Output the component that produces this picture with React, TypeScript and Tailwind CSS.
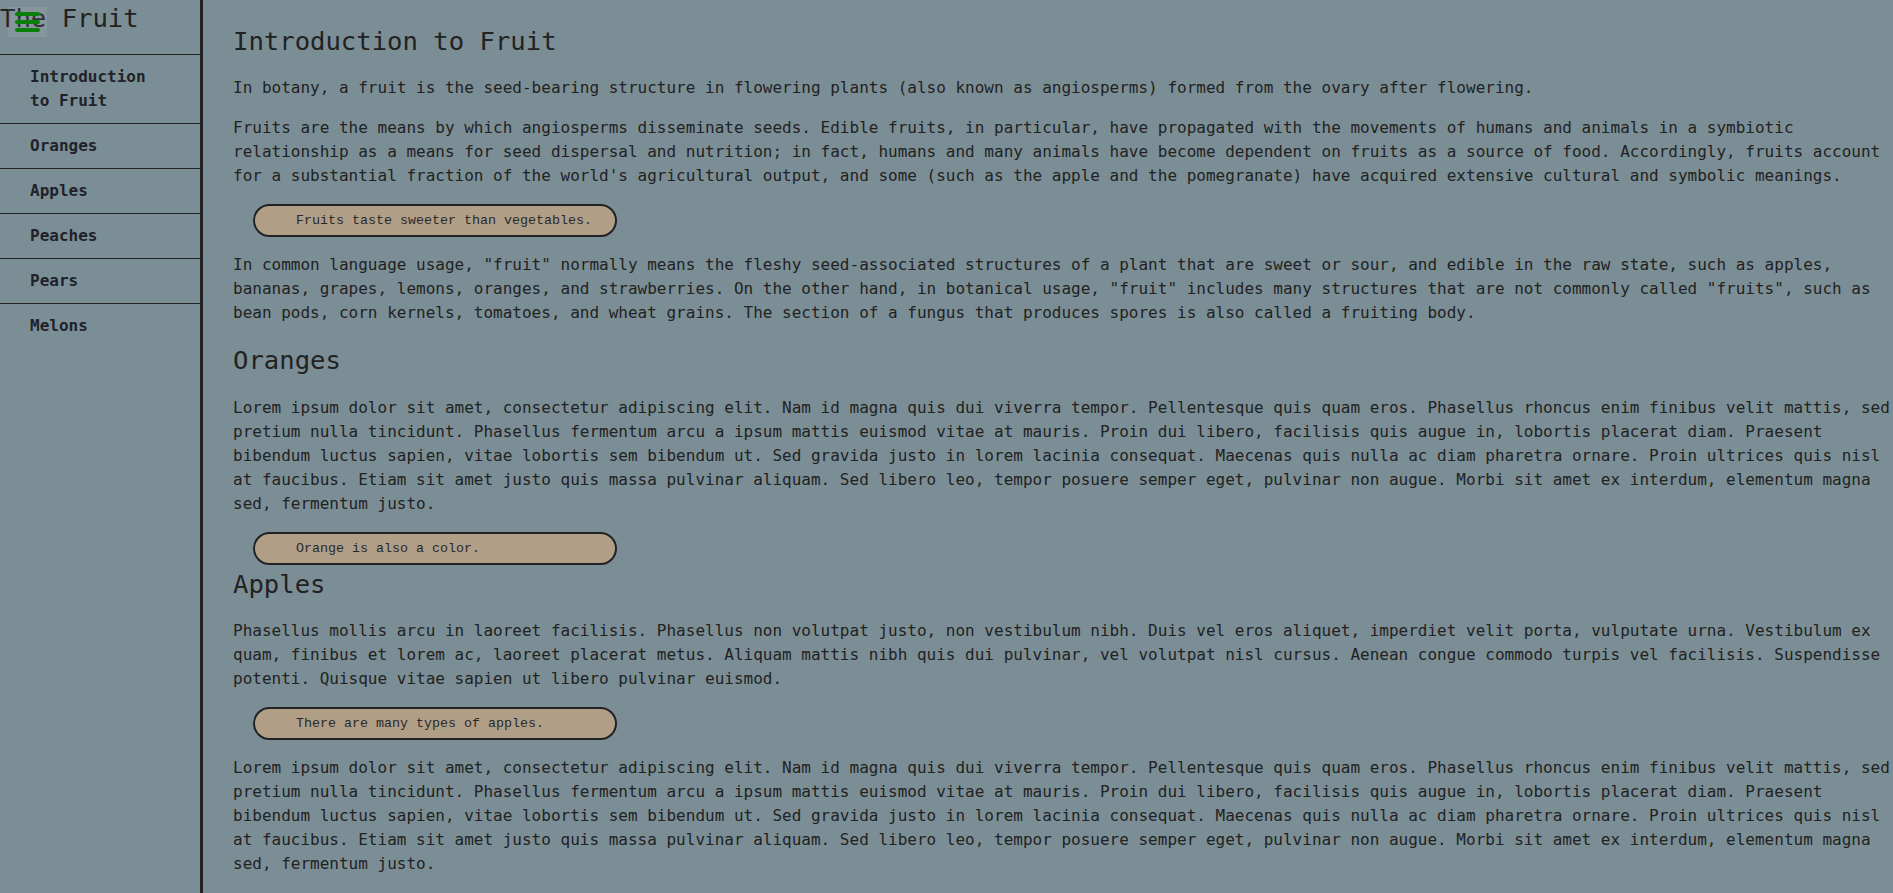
import React from "react";

const LOREM =
  "Lorem ipsum dolor sit amet, consectetur adipiscing elit. Nam id magna quis dui viverra tempor. Pellentesque quis quam eros. Phasellus rhoncus enim finibus velit mattis, sed pretium nulla tincidunt. Phasellus fermentum arcu a ipsum mattis euismod vitae at mauris. Proin dui libero, facilisis quis augue in, lobortis placerat diam. Praesent bibendum luctus sapien, vitae lobortis sem bibendum ut. Sed gravida justo in lorem lacinia consequat. Maecenas quis nulla ac diam pharetra ornare. Proin ultrices quis nisl at faucibus. Etiam sit amet justo quis massa pulvinar aliquam. Sed libero leo, tempor posuere semper eget, pulvinar non augue. Morbi sit amet ex interdum, elementum magna sed, fermentum justo.";

const APPLES =
  "Phasellus mollis arcu in laoreet facilisis. Phasellus non volutpat justo, non vestibulum nibh. Duis vel eros aliquet, imperdiet velit porta, vulputate urna. Vestibulum ex quam, finibus et lorem ac, laoreet placerat metus. Aliquam mattis nibh quis dui pulvinar, vel volutpat nisl cursus. Aenean congue commodo turpis vel facilisis. Suspendisse potenti. Quisque vitae sapien ut libero pulvinar euismod.";

const navItems = ["Introduction to Fruit", "Oranges", "Apples", "Peaches", "Pears", "Melons"];

function H2({ children }: { children: React.ReactNode }) {
  return <h2 className="m-0 text-[25.6px] leading-[38.4px] font-normal">{children}</h2>;
}

function P({ children }: { children: React.ReactNode }) {
  return <p className="my-4 text-[16px] leading-[24px]">{children}</p>;
}

function Callout({ children }: { children: React.ReactNode }) {
  return (
    <div className="ml-[20px] w-[364px] h-[33px] rounded-full border-2 border-[#222222] bg-[#b09e87] pl-[41px] text-[13.33px] leading-[29px] text-[#2a2a2a] [font-family:'Liberation_Mono','Courier_New',monospace]">
      {children}
    </div>
  );
}

export default function App() {
  return (
    <div className="flex h-[893px] w-full overflow-hidden bg-[#7b8e95] text-[#222222] [font-family:'DejaVu_Sans_Mono',monospace]">
      <aside className="relative w-[203px] shrink-0 border-r-[3px] border-[#222222] flex flex-col">
        <div className="relative h-[54px]">
          <div className="text-[25.6px] leading-[36px] whitespace-nowrap">The Fruit</div>
          <div className="absolute left-[8px] top-[7px] w-[39px] h-[30px] bg-[rgba(255,255,255,0.08)] flex flex-col items-center justify-center gap-[4px]">
            <span className="block w-[25px] h-[4px] rounded-full bg-[#0a800a]" />
            <span className="block w-[25px] h-[4px] rounded-full bg-[#0a800a]" />
            <span className="block w-[25px] h-[4px] rounded-full bg-[#0a800a]" />
          </div>
        </div>
        <ul className="m-0 p-0 list-none">
          {navItems.map((item) => (
            <li
              key={item}
              className="border-t border-[#222222] px-[30px] py-[10px] text-[16px] leading-[24px] font-bold text-[#1f222a]"
            >
              {item}
            </li>
          ))}
        </ul>
      </aside>
      <main className="flex-1 min-w-0 overflow-hidden pl-[30px] pt-[22px] block">
        <H2>Introduction to Fruit</H2>
        <P>
          In botany, a fruit is the seed-bearing structure in flowering plants (also known as angiosperms) formed from the ovary after flowering.
        </P>
        <P>
          Fruits are the means by which angiosperms disseminate seeds. Edible fruits, in particular, have propagated with the movements of humans and animals in a symbiotic relationship as a means for seed dispersal and nutrition; in fact, humans and many animals have become dependent on fruits as a source of food. Accordingly, fruits account for a substantial fraction of the world's agricultural output, and some (such as the apple and the pomegranate) have acquired extensive cultural and symbolic meanings.
        </P>
        <Callout>Fruits taste sweeter than vegetables.</Callout>
        <P>
          In common language usage, "fruit" normally means the fleshy seed-associated structures of a plant that are sweet or sour, and edible in the raw state, such as apples, bananas, grapes, lemons, oranges, and strawberries. On the other hand, in botanical usage, "fruit" includes many structures that are not commonly called "fruits", such as bean pods, corn kernels, tomatoes, and wheat grains. The section of a fungus that produces spores is also called a fruiting body.
        </P>
        <H2>Oranges</H2>
        <P>{LOREM}</P>
        <Callout>Orange is also a color.</Callout>
        <H2>Apples</H2>
        <P>{APPLES}</P>
        <Callout>There are many types of apples.</Callout>
        <P>{LOREM}</P>
        <H2>Peaches</H2>
        <P>{LOREM}</P>
        <H2>Pears</H2>
        <P>{LOREM}</P>
        <H2>Melons</H2>
        <P>{LOREM}</P>
      </main>
    </div>
  );
}
